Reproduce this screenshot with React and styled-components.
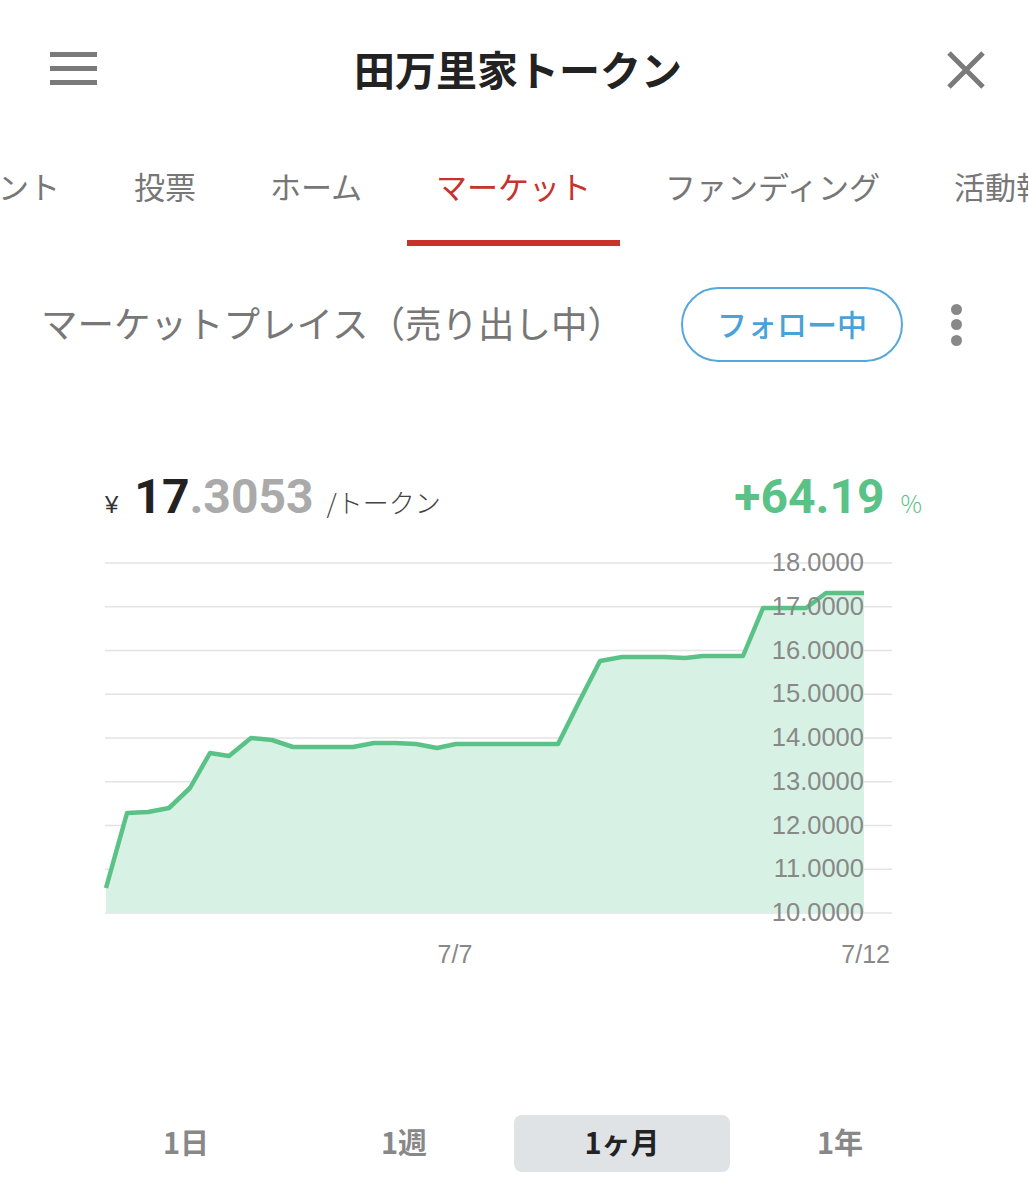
import React from "react";
import styled, { createGlobalStyle } from "styled-components";

const GlobalStyle = createGlobalStyle`
  body {
    margin: 0;
    background: #fff;
    font-family: "Noto Sans CJK JP", "Noto Sans", sans-serif;
  }
`;

const Page = styled.div`
  width: 1028px;
  overflow: hidden;
`;

const Header = styled.header`
  display: grid;
  grid-template-columns: 1fr auto 1fr;
  align-items: center;
  height: 140px;
  padding: 0 42px 0 50px;
  box-sizing: border-box;
`;

const Burger = styled.div`
  display: flex;
  flex-direction: column;
  gap: 9px;
  width: 47px;
  margin-top: -4px;
`;

const Bar = styled.span`
  display: block;
  height: 5px;
  background: #7a7a7a;
`;

const Title = styled.h1`
  margin: -4px 0 0;
  font-size: 41px;
  font-weight: 700;
  color: #222;
`;

const Close = styled.div`
  justify-self: end;
  display: flex;
`;

const Tabs = styled.nav`
  display: flex;
  gap: 16px;
  height: 106px;
  margin-left: -93px;
  white-space: nowrap;
`;

const Tab = styled.div`
  display: flex;
  align-items: center;
  box-sizing: border-box;
  height: 106px;
  padding: 0 29px 10px;
  font-size: 31px;
  font-weight: 400;
  color: ${(p) => (p.$active ? "#c8312c" : "#777")};
  border-bottom: 6px solid ${(p) => (p.$active ? "#c8312c" : "transparent")};
`;

const SectionRow = styled.div`
  display: flex;
  align-items: center;
  height: 75px;
  margin-top: 41px;
  padding: 0 66px 0 41px;
`;

const SectionTitle = styled.h2`
  margin: 0 0 4px;
  font-size: 36.5px;
  font-weight: 400;
  color: #777;
  flex: 1;
  white-space: nowrap;
`;

const FollowButton = styled.button`
  flex: none;
  width: 222px;
  height: 75px;
  border: 2px solid #54a8dc;
  border-radius: 38px;
  background: #fff;
  color: #49a2d8;
  font-family: "Noto Sans CJK JP", sans-serif;
  font-size: 30px;
  font-weight: 500;
  padding: 0 0 4px;
`;

const Kebab = styled.div`
  display: flex;
  flex-direction: column;
  gap: 4.5px;
  margin-left: 48px;
`;

const Dot = styled.span`
  width: 11px;
  height: 11px;
  border-radius: 50%;
  background: #888;
`;

const PriceRow = styled.div`
  display: flex;
  justify-content: space-between;
  align-items: baseline;
  height: 60px;
  margin-top: 111px;
  padding: 0 106px 0 105px;
  line-height: 1;
`;

const PriceGroup = styled.div`
  display: flex;
  align-items: baseline;
`;

const Yen = styled.span`
  font-family: "Liberation Sans", sans-serif;
  font-size: 24px;
  color: #333;
  margin-right: 16px;
`;

const Big = styled.span`
  font-family: Roboto, "Liberation Sans", sans-serif;
  font-size: 48px;
  font-weight: 700;
  color: ${(p) => p.$color};
`;

const Unit = styled.span`
  font-size: ${(p) => p.$size}px;
  font-weight: 300;
  color: ${(p) => p.$color};
  margin-left: ${(p) => p.$gap}px;
`;

const Chart = styled.svg`
  display: block;
  margin-top: 7px;
`;

const Periods = styled.div`
  display: grid;
  grid-template-columns: repeat(4, 218px);
  margin: 135px 0 0 77px;
`;

const Period = styled.div`
  display: flex;
  align-items: center;
  justify-content: center;
  box-sizing: border-box;
  height: 57px;
  margin: 0 1px;
  padding-bottom: 6px;
  border-radius: 8px;
  font-size: 29px;
  font-weight: 700;
  color: ${(p) => (p.$active ? "#222" : "#888")};
  background: ${(p) => (p.$active ? "#dfe3e6" : "transparent")};
`;

const tabs = ["イベント", "投票", "ホーム", "マーケット", "ファンディング", "活動報告"];
const periods = ["1日", "1週", "1ヶ月", "1年"];

const points = [
  [106, 888], [127, 813], [148, 812], [169, 808], [190, 788], [210, 753],
  [229, 756], [251, 738], [272, 740], [293, 747], [332, 747], [353, 747],
  [374, 743], [395, 743], [416, 744], [437, 748], [456, 744], [558, 744],
  [580, 700], [600, 661], [622, 657], [664, 657], [685, 658], [703, 656],
  [743, 656], [763, 608], [806, 608], [826, 593], [864, 593],
];

const top = 563;
const step = 43.75;
const gridValues = [18, 17, 16, 15, 14, 13, 12, 11, 10];

function PriceChart() {
  const line = points.map(([x, y], i) => `${i ? "L" : "M"}${x} ${y}`).join(" ");
  const area = `${line} L864 913 L106 913 Z`;
  return (
    <Chart width="1028" height="440" viewBox="0 540 1028 440">
      {gridValues.map((v, i) => (
        <line key={v} x1="105" x2="892" y1={top + i * step} y2={top + i * step} stroke="#e3e3e3" strokeWidth="1.5" />
      ))}
      <path d={area} fill="#d7f2e4" />
      <path d={line} fill="none" stroke="#5bc287" strokeWidth="4.5" strokeLinejoin="round" />
      {gridValues.map((v, i) => (
        <text
          key={v}
          x="864"
          y={top + i * step + 8}
          textAnchor="end"
          fontFamily="Liberation Sans, sans-serif"
          fontSize="25.5"
          fill="#888"
        >
          {v.toFixed(4)}
        </text>
      ))}
      <text x="455" y="963" textAnchor="middle" fontFamily="Liberation Sans, sans-serif" fontSize="25" fill="#888">
        7/7
      </text>
      <text x="890" y="963" textAnchor="end" fontFamily="Liberation Sans, sans-serif" fontSize="25" fill="#888">
        7/12
      </text>
    </Chart>
  );
}

export default function App() {
  return (
    <Page>
      <GlobalStyle />
      <Header>
        <Burger>
          <Bar />
          <Bar />
          <Bar />
        </Burger>
        <Title>田万里家トークン</Title>
        <Close>
          <svg width="40" height="40" viewBox="0 0 40 40">
            <path d="M3 3 L37 37 M37 3 L3 37" stroke="#7a7a7a" strokeWidth="5" />
          </svg>
        </Close>
      </Header>

      <Tabs>
        {tabs.map((t) => (
          <Tab key={t} $active={t === "マーケット"}>{t}</Tab>
        ))}
      </Tabs>

      <SectionRow>
        <SectionTitle>マーケットプレイス（売り出し中）</SectionTitle>
        <FollowButton>フォロー中</FollowButton>
        <Kebab>
          <Dot />
          <Dot />
          <Dot />
        </Kebab>
      </SectionRow>

      <PriceRow>
        <PriceGroup>
          <Yen>¥</Yen>
          <Big $color="#222">17</Big>
          <Big $color="#aaa">.3053</Big>
          <Unit $color="#444" $gap={13} $size={26}>/トークン</Unit>
        </PriceGroup>
        <PriceGroup>
          <Big $color="#5bc287">+64.19</Big>
          <Unit $color="#5bc287" $gap={16} $size={24}>%</Unit>
        </PriceGroup>
      </PriceRow>

      <PriceChart />

      <Periods>
        {periods.map((p) => (
          <Period key={p} $active={p === "1ヶ月"}>{p}</Period>
        ))}
      </Periods>
    </Page>
  );
}
